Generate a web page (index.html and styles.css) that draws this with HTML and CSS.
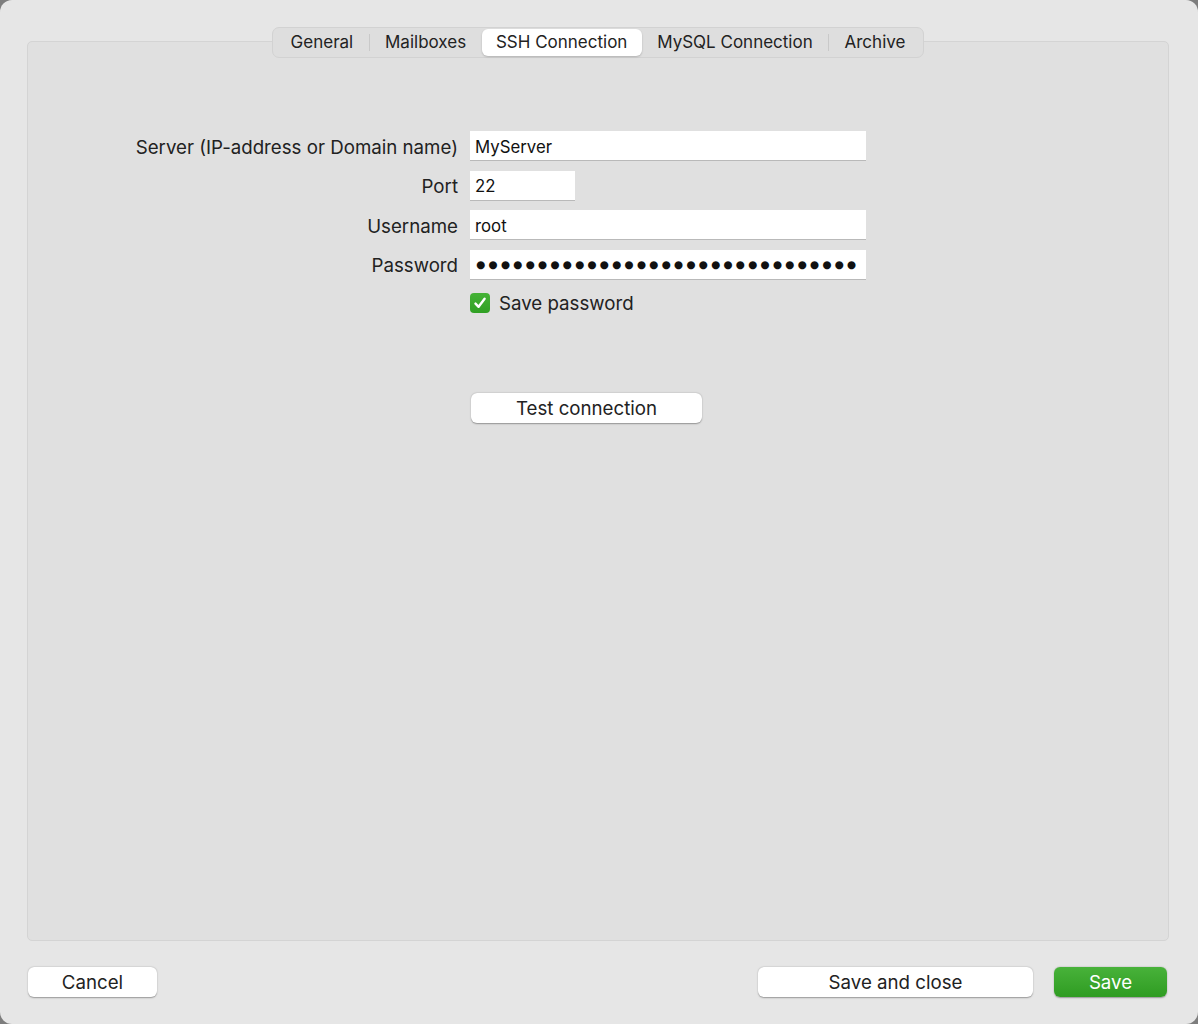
FILE: index.html
```html
<!DOCTYPE html>
<html lang="en">
<head>
    <meta charset="UTF-8">
    <title>Connection Settings</title>
    <link rel="stylesheet" href="styles.css">
</head>
<body>
    <div class="window">
        <div class="tabs">
            <div class="tab">General</div>
            <div class="sep"></div>
            <div class="tab">Mailboxes</div>
            <div class="tab active">SSH Connection</div>
            <div class="tab">MySQL Connection</div>
            <div class="sep"></div>
            <div class="tab">Archive</div>
        </div>

        <div class="panel">
            <div class="form">
                <label class="label" for="server">Server (IP-address or Domain name)</label>
                <input class="field" id="server" type="text" value="MyServer">

                <label class="label" for="port">Port</label>
                <input class="field short" id="port" type="text" value="22">

                <label class="label" for="user">Username</label>
                <input class="field" id="user" type="text" value="root">

                <label class="label" for="pass">Password</label>
                <div class="field dots">●●●●●●●●●●●●●●●●●●●●●●●●●●●●●●●</div>

                <div></div>
                <div class="check-row">
                    <span class="checkbox">
                        <svg width="14" height="14" viewBox="0 0 14 14"><path d="M2.5 7.6 L5.6 10.8 L11.6 2.8" fill="none" stroke="#fff" stroke-width="2.4" stroke-linecap="round" stroke-linejoin="round"/></svg>
                    </span>
                    <span>Save password</span>
                </div>

                <div></div>
                <div class="test-row">
                    <button class="btn test">Test connection</button>
                </div>
            </div>
        </div>

        <div class="footer">
            <button class="btn cancel">Cancel</button>
            <div class="spacer"></div>
            <button class="btn save-close">Save and close</button>
            <button class="btn primary">Save</button>
        </div>
    </div>
</body>
</html>
```

FILE: styles.css
```css
html {
    background-color: #7d7d7d;
}

body {
    margin: 0;
    font-family: 'Inter', 'Liberation Sans', sans-serif;
    color: #222;
}

.window {
    width: 1198px;
    height: 1024px;
    box-sizing: border-box;
    background-color: #e6e6e6;
    border-radius: 12px;
    padding: 27px 29px 0 27px;
    display: flex;
    flex-direction: column;
}

/* segmented control sitting on the panel's top edge */
.tabs {
    align-self: center;
    display: flex;
    align-items: center;
    height: 31px;
    box-sizing: border-box;
    padding: 0 2px;
    background-color: #dedede;
    border: 1px solid #d2d2d2;
    border-radius: 7px;
    margin-bottom: -17px;
    position: relative;
    z-index: 1;
    font-size: 17px;
}

.tab {
    height: 27px;
    line-height: 27px;
    padding: 0 15.4px;
    border-radius: 6px;
}

.tab.active {
    background-color: #fff;
    box-shadow: 0 1px 2px rgba(0, 0, 0, 0.2);
    padding: 0 14.4px;
}

.sep {
    width: 1px;
    height: 17px;
    background-color: #c9c9c9;
}

.panel {
    height: 900px;
    box-sizing: border-box;
    background-color: #e0e0e0;
    border: 1px solid #d4d4d4;
    border-radius: 5px;
    padding-top: 89px;
}

.form {
    display: grid;
    grid-template-columns: 430px 396px;
    column-gap: 12px;
    row-gap: 9.5px;
    align-items: center;
}

.label {
    text-align: right;
    font-size: 18.7px;
    padding-top: 2px;
}

.field {
    height: 30px;
    box-sizing: border-box;
    border: none;
    border-bottom: 1px solid #b9b9b9;
    background-color: #fff;
    padding: 2px 5px 0;
    font-family: 'Inter', 'Liberation Sans', sans-serif;
    font-size: 16.8px;
    color: #111;
    outline: none;
    width: 100%;
}

.field.short {
    width: 105px;
}

.dots {
    display: flex;
    align-items: center;
    font-family: 'DejaVu Sans', sans-serif;
    font-size: 10.5px;
    letter-spacing: 3.2px;
    padding: 0 0 0 6px;
    white-space: nowrap;
    overflow: hidden;
}

.check-row {
    display: flex;
    align-items: center;
    gap: 9px;
    height: 24px;
    font-size: 18.7px;
    margin-top: 2px;
}

.checkbox {
    width: 20px;
    height: 20px;
    border-radius: 4px;
    background: linear-gradient(#45b236, #30a024);
    display: flex;
    align-items: center;
    justify-content: center;
}

.test-row {
    margin-top: 68px;
}

.btn {
    height: 30px;
    box-sizing: border-box;
    border: none;
    border-radius: 6px;
    background-color: #fff;
    box-shadow: 0 0.5px 1.5px rgba(0, 0, 0, 0.35);
    font-family: 'Inter', 'Liberation Sans', sans-serif;
    font-size: 18.7px;
    color: #222;
    padding: 1px 0 0;
}

.btn.test {
    width: 231px;
    margin-left: 1px;
}

.footer {
    display: flex;
    align-items: center;
    margin-top: 26px;
    padding-left: 1px;
}

.spacer {
    flex: 1;
}

.btn.cancel {
    width: 129px;
}

.btn.save-close {
    width: 275px;
}

.btn.primary {
    width: 113px;
    margin-left: 21px;
    margin-right: 2px;
    color: #fff;
    background: linear-gradient(#48b23a, #2f9c22);
}
```
